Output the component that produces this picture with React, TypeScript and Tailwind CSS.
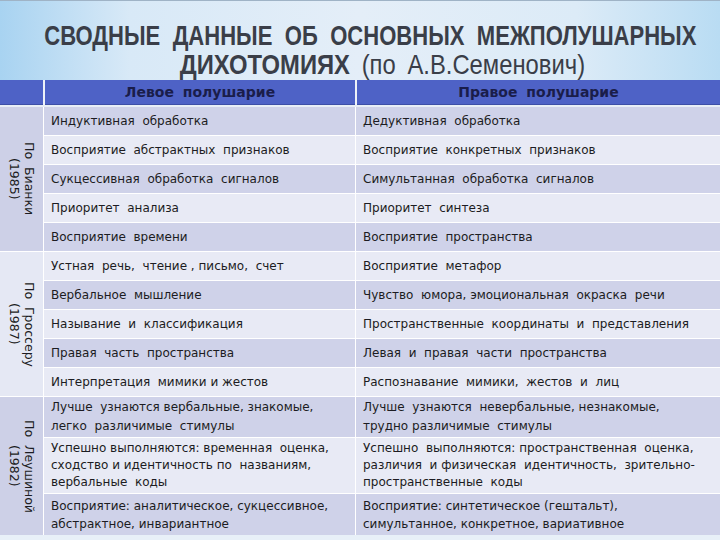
import React from "react";

type Row = { l: string[]; r: string[]; h: number; lh?: number };

const groups: { label: string[]; bg: string; rows: Row[] }[] = [
  {
    label: ["По  Бианки", "(1985)"],
    bg: "bg-[#cdd0e7]",
    rows: [
      { l: ["Индуктивная  обработка"], r: ["Дедуктивная  обработка"], h: 29 },
      { l: ["Восприятие  абстрактных  признаков"], r: ["Восприятие  конкретных  признаков"], h: 29 },
      { l: ["Сукцессивная  обработка  сигналов"], r: ["Симультанная  обработка  сигналов"], h: 29 },
      { l: ["Приоритет  анализа"], r: ["Приоритет  синтеза"], h: 29 },
      { l: ["Восприятие  времени"], r: ["Восприятие  пространства"], h: 29 },
    ],
  },
  {
    label: ["По  Гроссеру", "(1987)"],
    bg: "bg-[#e5e8f4]",
    rows: [
      { l: ["Устная  речь,  чтение , письмо,  счет"], r: ["Восприятие  метафор"], h: 29 },
      { l: ["Вербальное  мышление"], r: ["Чувство  юмора, эмоциональная  окраска  речи"], h: 29 },
      { l: ["Называние  и  классификация"], r: ["Пространственные  координаты  и  представления"], h: 29 },
      { l: ["Правая  часть  пространства"], r: ["Левая  и  правая  части  пространства"], h: 29 },
      { l: ["Интерпретация  мимики и жестов"], r: ["Распознавание  мимики,  жестов  и  лиц"], h: 29 },
    ],
  },
  {
    label: ["По  Леушиной", "(1982)"],
    bg: "bg-[#cdd0e7]",
    rows: [
      {
        l: ["Лучше  узнаются вербальные, знакомые,", "легко  различимые  стимулы"],
        r: ["Лучше  узнаются  невербальные, незнакомые,", "трудно различимые  стимулы"],
        h: 41,
        lh: 19,
      },
      {
        l: ["Успешно выполняются: временная  оценка,", "сходство и идентичность по  названиям,", "вербальные  коды"],
        r: ["Успешно  выполняются: пространственная  оценка,", "различия  и физическая  идентичность,  зрительно-", "пространственные  коды"],
        h: 56,
        lh: 17,
      },
      {
        l: ["Восприятие: аналитическое, сукцессивное,", "абстрактное, инвариантное"],
        r: ["Восприятие: синтетическое (гештальт),", "симультанное, конкретное, вариативное"],
        h: 42,
        lh: 18,
      },
    ],
  },
];

const font = { fontFamily: '"DejaVu Sans", "Liberation Sans", sans-serif' };
const titleFont = { fontFamily: '"Liberation Sans", Arial, sans-serif' };

function Cell({ lines, dark, lh, w }: { lines: string[]; dark: boolean; lh: number; w: string }) {
  return (
    <div
      className={`${w} flex flex-col justify-center px-[7px] whitespace-pre text-[12px] text-[#1c1c22] ${
        dark ? "bg-[#cfd2e9]" : "bg-[#e8eaf5]"
      }`}
      style={{ lineHeight: `${lh}px` }}
    >
      {lines.map((t, i) => (
        <div key={i}>{t}</div>
      ))}
    </div>
  );
}

export default function App() {
  let idx = 0;
  return (
    <div className="w-[720px] h-[540px] overflow-hidden bg-[#e8f0f8] flex flex-col" style={font}>
      <div className="h-[80px] shrink-0 border-t border-[#9fb3c6] bg-[linear-gradient(90deg,#a8d3f1_0%,#d8e9f7_18%,#e4eef8_50%,#dcebf7_80%,#b9dcf3_100%)] flex flex-col items-center pt-[21px]">
        <div
          className="text-[28px] leading-[28px] font-bold text-[#3a3e48] whitespace-pre [word-spacing:8px] scale-x-[0.787] translate-x-[10px]"
          style={titleFont}
        >
          СВОДНЫЕ ДАННЫЕ ОБ ОСНОВНЫХ МЕЖПОЛУШАРНЫХ
        </div>
        <div
          className="text-[28px] leading-[29px] text-[#3a3e48] whitespace-pre [word-spacing:6px] scale-x-[0.85] translate-x-[22px]"
          style={titleFont}
        >
          <span className="font-bold">ДИХОТОМИЯХ</span> (по А.В.Семенович)
        </div>
      </div>

      {/* header row */}
      <div className="h-[27px] shrink-0 flex gap-[2px] bg-[#eef2f8] border-b-[2px] border-[#e8eef6]">
        <div className="w-[43px] bg-[#4e62c6] border-b border-[#3d4fa6]" />
        <div className="w-[310px] bg-[#4e62c6] border-b border-[#3d4fa6] flex items-center justify-center text-[14px] font-bold text-[#1a1d4a] [word-spacing:4px]">
          Левое полушарие
        </div>
        <div className="flex-1 bg-[#4e62c6] border-b border-[#3d4fa6] flex items-center justify-center text-[14px] font-bold text-[#1a1d4a] [word-spacing:4px]">
          Правое полушарие
        </div>
      </div>

      <div className="flex flex-col gap-[1px] bg-white">
        {groups.map((g, gi) => (
          <div key={gi} className="flex gap-[1px] bg-white">
            <div className={`w-[43px] shrink-0 ${g.bg} flex items-center justify-center`}>
              <div
                className="text-[12.5px] leading-[15px] text-[#1c1c22] whitespace-pre text-center"
                style={{ writingMode: "vertical-rl" }}
              >
                <div>{g.label[0]}</div>
                <div>{g.label[1]}</div>
              </div>
            </div>
            <div className="flex-1 flex flex-col gap-[1px] bg-white">
              {g.rows.map((r, ri) => {
                const dark = idx % 2 === 0;
                idx++;
                return (
                  <div key={ri} className="flex gap-[1px] bg-white" style={{ height: r.h - 1 }}>
                    <Cell lines={r.l} dark={dark} lh={r.lh ?? 18} w="w-[311px]" />
                    <Cell lines={r.r} dark={dark} lh={r.lh ?? 18} w="flex-1" />
                  </div>
                );
              })}
            </div>
          </div>
        ))}
      </div>
    </div>
  );
}
